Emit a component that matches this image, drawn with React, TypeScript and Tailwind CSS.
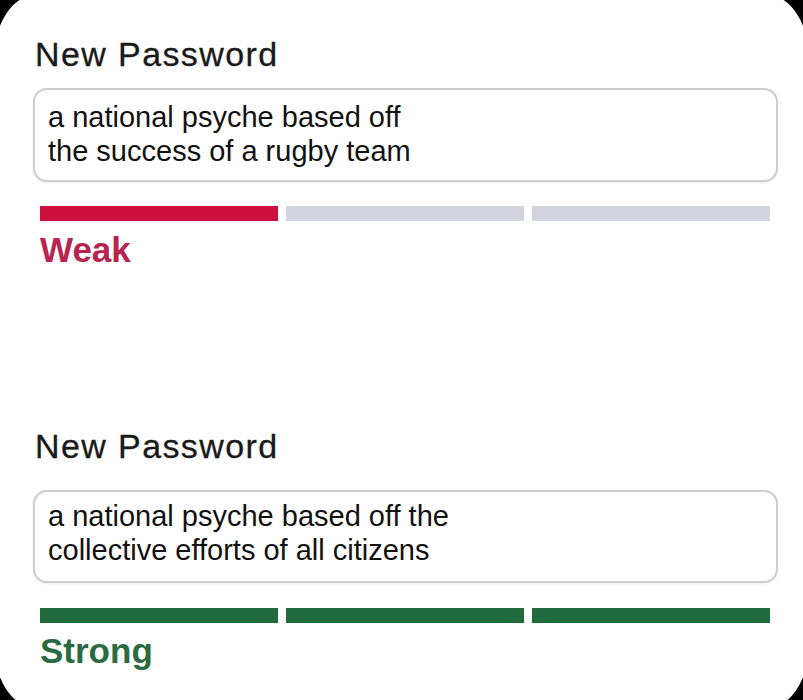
const sans = { fontFamily: '"Liberation Sans", Arial, sans-serif' };

type Props = {
  first?: boolean;
  lines: string[];
  strength: "weak" | "strong";
};

function PasswordField({ first, lines, strength }: Props) {
  const weak = strength === "weak";
  return (
    <div className={first ? "flex flex-col" : "flex flex-col mt-[156px]"}>
      <div className="ml-[2px] text-[34px] leading-[40px] tracking-[1.4px] text-[#1a1a1a] [-webkit-text-stroke:0.3px_#1a1a1a]">
        New Password
      </div>
      <div
        className={
          (first ? "mt-[14px] h-[94px] pt-[10px]" : "mt-[24px] h-[93px] pt-[7px]") +
          " w-[745px] rounded-[14px] border-2 border-[#cdcdd2] bg-white pl-[13px] text-[29px] leading-[34px] text-[#111] shadow-[0_1px_2px_rgba(0,0,0,0.08)]"
        }
      >
        {lines.map((l) => (
          <div key={l}>{l}</div>
        ))}
      </div>
      <div className={(first ? "mt-[24px]" : "mt-[25px]") + " ml-[7px] flex w-[730px] gap-[8px]"}>
        <div className={"h-[15px] flex-1 " + (weak ? "bg-[#cc0f3d]" : "bg-[#1f6b3d]")} />
        <div className={"h-[15px] flex-1 " + (weak ? "bg-[#d3d5de]" : "bg-[#1f6b3d]")} />
        <div className={"h-[15px] flex-1 " + (weak ? "bg-[#d3d5de]" : "bg-[#1f6b3d]")} />
      </div>
      <div
        className={
          (first ? "mt-[9px]" : "mt-[8px]") +
          " ml-[7px] text-[35px] font-bold leading-[40px] " +
          (weak ? "text-[#b8244f]" : "text-[#2b6b44]")
        }
      >
        {weak ? "Weak" : "Strong"}
      </div>
    </div>
  );
}

export default function App() {
  return (
    <div className="h-[700px] w-[803px] overflow-hidden bg-black" style={sans}>
      <div className="-ml-[6px] -mt-[6px] h-[715px] w-[815px] rounded-[44px/64px] bg-white pl-[39px] pt-[40px]">
        <PasswordField
          first
          strength="weak"
          lines={["a national psyche based off", "the success of a rugby team"]}
        />
        <PasswordField
          strength="strong"
          lines={["a national psyche based off the", "collective efforts of all citizens"]}
        />
      </div>
    </div>
  );
}
